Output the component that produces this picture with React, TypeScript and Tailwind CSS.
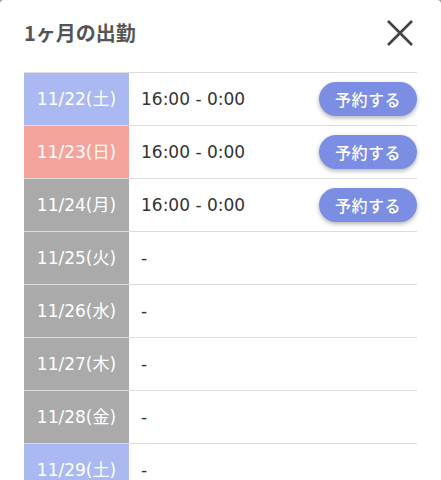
const rows: { date: string; kind: "sat" | "sun" | "day"; time: string; book: boolean }[] = [
  { date: "11/22(土)", kind: "sat", time: "16:00 - 0:00", book: true },
  { date: "11/23(日)", kind: "sun", time: "16:00 - 0:00", book: true },
  { date: "11/24(月)", kind: "day", time: "16:00 - 0:00", book: true },
  { date: "11/25(火)", kind: "day", time: "-", book: false },
  { date: "11/26(水)", kind: "day", time: "-", book: false },
  { date: "11/27(木)", kind: "day", time: "-", book: false },
  { date: "11/28(金)", kind: "day", time: "-", book: false },
  { date: "11/29(土)", kind: "sat", time: "-", book: false },
];

const cellBg = {
  sat: "bg-[#abb9f3]",
  sun: "bg-[#f5a49b]",
  day: "bg-[#aaaaaa]",
};

export default function App() {
  return (
    <div className="h-[480px] w-[441px] overflow-hidden bg-[#9a9a9a] font-['Noto_Sans_CJK_JP',sans-serif]">
      <div className="h-full rounded-t-[4px] bg-white px-6">
        {/* Header */}
        <div className="flex h-[72px] items-start justify-between pt-[18px]">
          <h2 className="text-[20px] font-bold leading-[30px] text-[#555]">1ヶ月の出勤</h2>
          <button className="mr-[4px] mt-[2px] flex h-[26px] w-[26px] items-center justify-center">
            <svg width="26" height="26" viewBox="0 0 26 26" fill="none">
              <path d="M1 1L25 25M25 1L1 25" stroke="#444" strokeWidth="2.7" />
            </svg>
          </button>
        </div>

        {/* Schedule table */}
        <div className="border-t border-[#dcdcdc] font-['DejaVu_Sans','Noto_Sans_CJK_JP',sans-serif]">
          {rows.map((r) => (
            <div key={r.date} className="flex h-[53px] border-b border-[#dcdcdc]">
              <div
                className={`flex w-[105px] shrink-0 items-center justify-center pt-[2px] text-[17px] text-white ${cellBg[r.kind]}`}
              >
                {r.date}
              </div>
              <div className="flex flex-1 items-center justify-between pl-3">
                <span className="pt-[2px] text-[17px] text-[#333]">{r.time}</span>
                {r.book && (
                  <button className="flex h-[34px] w-[98px] items-center justify-center rounded-full bg-[#7b8ee3] font-['Noto_Sans_CJK_JP',sans-serif] text-[16px] font-medium tracking-[0.03em] text-white shadow-[0_2px_4px_rgba(0,0,0,0.3)]">
                    予約する
                  </button>
                )}
              </div>
            </div>
          ))}
        </div>
      </div>
    </div>
  );
}
